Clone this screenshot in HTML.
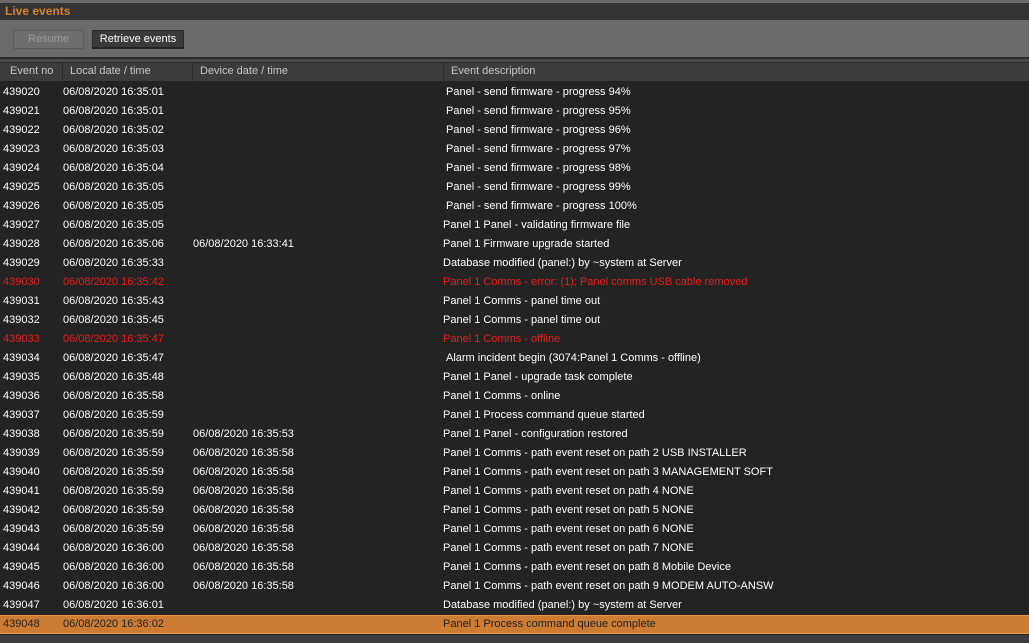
<!DOCTYPE html>
<html><head><style>
*{margin:0;padding:0;box-sizing:border-box}
body{width:1029px;height:643px;overflow:hidden;background:#232323;font-family:"Liberation Sans",Tahoma,sans-serif;font-size:11px;color:#fff;position:relative}
.a{position:absolute}
.row{position:absolute;left:0;width:1029px;height:19px;line-height:19px;white-space:nowrap}
.row span{position:absolute}
.c1{left:3px}.c2{left:63px}.c3{left:193px}.c4{left:443px}
.red{color:#e81c1c}
.sel{background:#cc7d33;border-top:1px solid #e89a4c;border-bottom:1px solid #e89a4c;color:#222}
</style></head><body>
<div class="a" style="left:0;top:0;width:1029px;height:3px;background:#6a6a6a"></div>
<div class="a" style="left:0;top:3px;width:1029px;height:17px;background:#333"></div>
<div class="a" style="left:5px;top:3px;height:17px;line-height:17px;font-weight:bold;font-size:12px;color:#d8812f">Live events</div>
<div class="a" style="left:0;top:20px;width:1029px;height:37px;background:#6b6b6b"></div>
<div class="a" style="left:13px;top:30px;width:71px;height:19px;background:#6e6e6e;border:1px solid #5c5c5c;color:#9a9a9a;text-align:center;line-height:17px">Resume</div>
<div class="a" style="left:92px;top:30px;width:92px;height:19px;background:#3a3a3a;border:1px solid #2a2a2a;border-bottom:2px solid #222;color:#fff;text-align:center;line-height:17px">Retrieve events</div>
<div class="a" style="left:0;top:57px;width:1029px;height:2px;background:#2a2a2a"></div>
<div class="a" style="left:0;top:59px;width:1029px;height:3px;background:#4a4a4a"></div>
<div class="a" style="left:0;top:62px;width:1029px;height:1px;background:#2a2a2a"></div>
<div class="a" style="left:0;top:63px;width:1029px;height:18px;background:#3c3c3c;color:#c8c8c8;line-height:17px">
<span class="a" style="left:10px">Event no</span>
<span class="a" style="left:62px;width:1px;height:18px;background:#2c2c2c"></span>
<span class="a" style="left:70px">Local date / time</span>
<span class="a" style="left:192px;width:1px;height:18px;background:#2c2c2c"></span>
<span class="a" style="left:200px">Device date / time</span>
<span class="a" style="left:443px;width:1px;height:18px;background:#2c2c2c"></span>
<span class="a" style="left:451px">Event description</span>
</div>
<div class="row" style="top:83px"><span class="c1">439020</span><span class="c2">06/08/2020 16:35:01</span><span class="c4" style="left:446px">Panel - send firmware - progress 94%</span></div>
<div class="row" style="top:102px"><span class="c1">439021</span><span class="c2">06/08/2020 16:35:01</span><span class="c4" style="left:446px">Panel - send firmware - progress 95%</span></div>
<div class="row" style="top:121px"><span class="c1">439022</span><span class="c2">06/08/2020 16:35:02</span><span class="c4" style="left:446px">Panel - send firmware - progress 96%</span></div>
<div class="row" style="top:140px"><span class="c1">439023</span><span class="c2">06/08/2020 16:35:03</span><span class="c4" style="left:446px">Panel - send firmware - progress 97%</span></div>
<div class="row" style="top:159px"><span class="c1">439024</span><span class="c2">06/08/2020 16:35:04</span><span class="c4" style="left:446px">Panel - send firmware - progress 98%</span></div>
<div class="row" style="top:178px"><span class="c1">439025</span><span class="c2">06/08/2020 16:35:05</span><span class="c4" style="left:446px">Panel - send firmware - progress 99%</span></div>
<div class="row" style="top:197px"><span class="c1">439026</span><span class="c2">06/08/2020 16:35:05</span><span class="c4" style="left:446px">Panel - send firmware - progress 100%</span></div>
<div class="row" style="top:216px"><span class="c1">439027</span><span class="c2">06/08/2020 16:35:05</span><span class="c4">Panel 1 Panel - validating firmware file</span></div>
<div class="row" style="top:235px"><span class="c1">439028</span><span class="c2">06/08/2020 16:35:06</span><span class="c3">06/08/2020 16:33:41</span><span class="c4">Panel 1 Firmware upgrade started</span></div>
<div class="row" style="top:254px"><span class="c1">439029</span><span class="c2">06/08/2020 16:35:33</span><span class="c4">Database modified (panel:) by ~system at Server</span></div>
<div class="row red" style="top:273px"><span class="c1">439030</span><span class="c2">06/08/2020 16:35:42</span><span class="c4">Panel 1 Comms - error: (1); Panel comms USB cable removed</span></div>
<div class="row" style="top:292px"><span class="c1">439031</span><span class="c2">06/08/2020 16:35:43</span><span class="c4">Panel 1 Comms - panel time out</span></div>
<div class="row" style="top:311px"><span class="c1">439032</span><span class="c2">06/08/2020 16:35:45</span><span class="c4">Panel 1 Comms - panel time out</span></div>
<div class="row red" style="top:330px"><span class="c1">439033</span><span class="c2">06/08/2020 16:35:47</span><span class="c4">Panel 1 Comms - offline</span></div>
<div class="row" style="top:349px"><span class="c1">439034</span><span class="c2">06/08/2020 16:35:47</span><span class="c4" style="left:446px">Alarm incident begin (3074:Panel 1 Comms - offline)</span></div>
<div class="row" style="top:368px"><span class="c1">439035</span><span class="c2">06/08/2020 16:35:48</span><span class="c4">Panel 1 Panel - upgrade task complete</span></div>
<div class="row" style="top:387px"><span class="c1">439036</span><span class="c2">06/08/2020 16:35:58</span><span class="c4">Panel 1 Comms - online</span></div>
<div class="row" style="top:406px"><span class="c1">439037</span><span class="c2">06/08/2020 16:35:59</span><span class="c4">Panel 1 Process command queue started</span></div>
<div class="row" style="top:425px"><span class="c1">439038</span><span class="c2">06/08/2020 16:35:59</span><span class="c3">06/08/2020 16:35:53</span><span class="c4">Panel 1 Panel - configuration restored</span></div>
<div class="row" style="top:444px"><span class="c1">439039</span><span class="c2">06/08/2020 16:35:59</span><span class="c3">06/08/2020 16:35:58</span><span class="c4">Panel 1 Comms - path event reset on path 2 USB INSTALLER</span></div>
<div class="row" style="top:463px"><span class="c1">439040</span><span class="c2">06/08/2020 16:35:59</span><span class="c3">06/08/2020 16:35:58</span><span class="c4">Panel 1 Comms - path event reset on path 3 MANAGEMENT SOFT</span></div>
<div class="row" style="top:482px"><span class="c1">439041</span><span class="c2">06/08/2020 16:35:59</span><span class="c3">06/08/2020 16:35:58</span><span class="c4">Panel 1 Comms - path event reset on path 4 NONE</span></div>
<div class="row" style="top:501px"><span class="c1">439042</span><span class="c2">06/08/2020 16:35:59</span><span class="c3">06/08/2020 16:35:58</span><span class="c4">Panel 1 Comms - path event reset on path 5 NONE</span></div>
<div class="row" style="top:520px"><span class="c1">439043</span><span class="c2">06/08/2020 16:35:59</span><span class="c3">06/08/2020 16:35:58</span><span class="c4">Panel 1 Comms - path event reset on path 6 NONE</span></div>
<div class="row" style="top:539px"><span class="c1">439044</span><span class="c2">06/08/2020 16:36:00</span><span class="c3">06/08/2020 16:35:58</span><span class="c4">Panel 1 Comms - path event reset on path 7 NONE</span></div>
<div class="row" style="top:558px"><span class="c1">439045</span><span class="c2">06/08/2020 16:36:00</span><span class="c3">06/08/2020 16:35:58</span><span class="c4">Panel 1 Comms - path event reset on path 8 Mobile Device</span></div>
<div class="row" style="top:577px"><span class="c1">439046</span><span class="c2">06/08/2020 16:36:00</span><span class="c3">06/08/2020 16:35:58</span><span class="c4">Panel 1 Comms - path event reset on path 9 MODEM AUTO-ANSW</span></div>
<div class="row" style="top:596px"><span class="c1">439047</span><span class="c2">06/08/2020 16:36:01</span><span class="c4">Database modified (panel:) by ~system at Server</span></div>
<div class="row sel" style="top:615px;line-height:17px"><span class="c1">439048</span><span class="c2">06/08/2020 16:36:02</span><span class="c4">Panel 1 Process command queue complete</span></div>
<div class="a" style="left:0;top:635px;width:1029px;height:8px;background:#3e3e3e"></div>
</body></html>
